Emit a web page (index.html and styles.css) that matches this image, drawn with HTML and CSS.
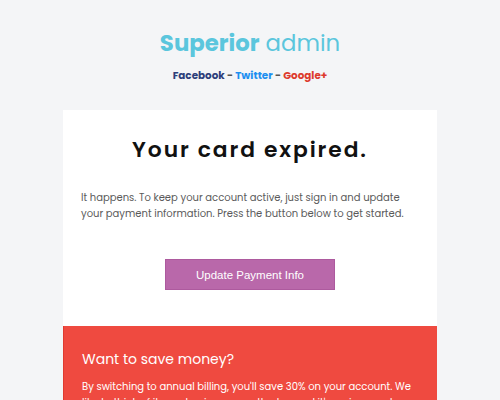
FILE: index.html
```html
<!DOCTYPE html>
<html>
<head>
<meta charset="utf-8">
<link rel="stylesheet" href="styles.css">
</head>
<body>
<div class="page">
  <header class="brand">
    <h1 class="logo"><span class="logo-strong">Superior</span> admin</h1>
    <p class="social"><span class="fb">Facebook</span> - <span class="tw">Twitter</span> - <span class="gp">Google+</span></p>
  </header>
  <main class="card">
    <section class="card-body">
      <h2 class="title">Your card expired.</h2>
      <p class="text">It happens. To keep your account active, just sign in and update your payment information. Press the button below to get started.</p>
      <div class="actions"><a class="btn">Update Payment Info</a></div>
    </section>
    <section class="promo">
      <h3 class="promo-title">Want to save money?</h3>
      <p class="promo-text">By switching to annual billing, you'll save 30% on your account. We like to think of it as a business growth plan and it's a nice way to thank you.</p>
    </section>
  </main>
</div>
</body>
</html>
```
FILE: styles.css
```css
html, body { margin: 0; padding: 0; }
body {
  background: #f4f5f7;
  font-family: "Poppins", "Open Sans", "DejaVu Sans", sans-serif;
  overflow: hidden;
  height: 400px;
}
.page { display: flex; flex-direction: column; align-items: center; }
.brand { text-align: center; padding-top: 27px; }
.logo {
  margin: 0;
  font-size: 22.8px;
  font-weight: 400;
  color: #5bc6dd;
  line-height: 32px;
}
.logo-strong { font-weight: 700; }
.social {
  margin: 10px 0 0;
  font-size: 10.4px;
  font-weight: 700;
  color: #555;
  line-height: 14px;
}
.fb { color: #2d3e7a; }
.tw { color: #1d8ff0; }
.gp { color: #dd3a2c; }
.card {
  width: 374px;
  margin-top: 27px;
  background: #fff;
}
.card-body { padding: 20px 18px 36px; }
.title {
  margin: 0;
  text-align: center;
  font-size: 21.8px;
  font-weight: 600;
  letter-spacing: 1.9px;
  color: #111;
  line-height: 40px;
}
.text {
  margin: 20px 0 0;
  font-size: 10px;
  line-height: 16px;
  color: #5a5a5a;
}
.actions { display: flex; justify-content: center; margin-top: 37px; }
.btn {
  width: 168px;
  height: 29px;
  display: flex; align-items: center; justify-content: center;
  background: #b968aa;
  border: 1px solid #ad5a9e;
  color: #fff;
  font-family: "Liberation Sans", Arial, sans-serif;
  font-size: 11.5px;
}
.promo {
  background: #ef4a40;
  border-left: 1px solid #e03a30;
  padding: 23px 18px;
  color: #fff;
}
.promo-title {
  margin: 0;
  font-size: 14px;
  font-weight: 400;
  line-height: 20px;
}
.promo-text {
  margin: 10px 0 0;
  font-size: 10px;
  line-height: 16px;
}
```
